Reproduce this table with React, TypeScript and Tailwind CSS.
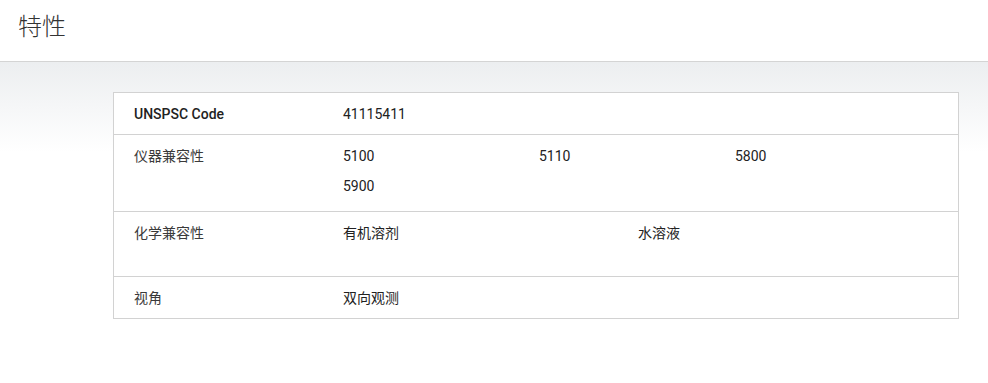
import React from "react";

const font = {
  fontFamily: '"Roboto", "Noto Sans CJK SC", sans-serif',
};

type Row = {
  label: string;
  bold?: boolean;
  values: string[];
  cols: string;
  height: string;
};

const rows: Row[] = [
  { label: "UNSPSC Code", bold: true, values: ["41115411"], cols: "grid-cols-1", height: "h-[42px]" },
  { label: "仪器兼容性", values: ["5100", "5110", "5800", "5900"], cols: "grid-cols-[196px_196px_196px]", height: "h-[77px]" },
  { label: "化学兼容性", values: ["有机溶剂", "水溶液"], cols: "grid-cols-[295px_295px]", height: "h-[65px]" },
  { label: "视角", values: ["双向观测"], cols: "grid-cols-1", height: "h-[41px]" },
];

export default function App() {
  return (
    <div className="min-h-[383px] w-[988px] bg-white text-[#333]" style={font}>
      <header className="flex h-[62px] items-start border-b border-[#d4d4d4] bg-white pl-[18px] pt-[12px]">
        <h1 className="text-[24px] font-light leading-[30px] text-[#333]">特性</h1>
      </header>
      <section className="bg-[linear-gradient(to_bottom,#eceef0_0px,#ffffff_90px)] pl-[113px] pt-[30px]">
        <div className="w-[846px] border border-[#d2d2d2] bg-white">
          {rows.map((r, i) => (
            <div
              key={r.label}
              className={`flex ${r.height} ${i < rows.length - 1 ? "border-b border-[#d2d2d2]" : ""}`}
            >
              <div
                className={`w-[229px] shrink-0 pl-[20px] pt-[11px] text-[14px] leading-[20px] ${
                  r.bold ? "font-medium text-[#222]" : "text-[#3a3a3a]"
                }`}
              >
                {r.label}
              </div>
              <div
                className={`grid ${r.cols} content-start gap-y-[10px] pt-[11px] text-[14px] leading-[20px] text-[#222]`}
              >
                {r.values.map((v) => (
                  <div key={v}>{v}</div>
                ))}
              </div>
            </div>
          ))}
        </div>
      </section>
    </div>
  );
}
